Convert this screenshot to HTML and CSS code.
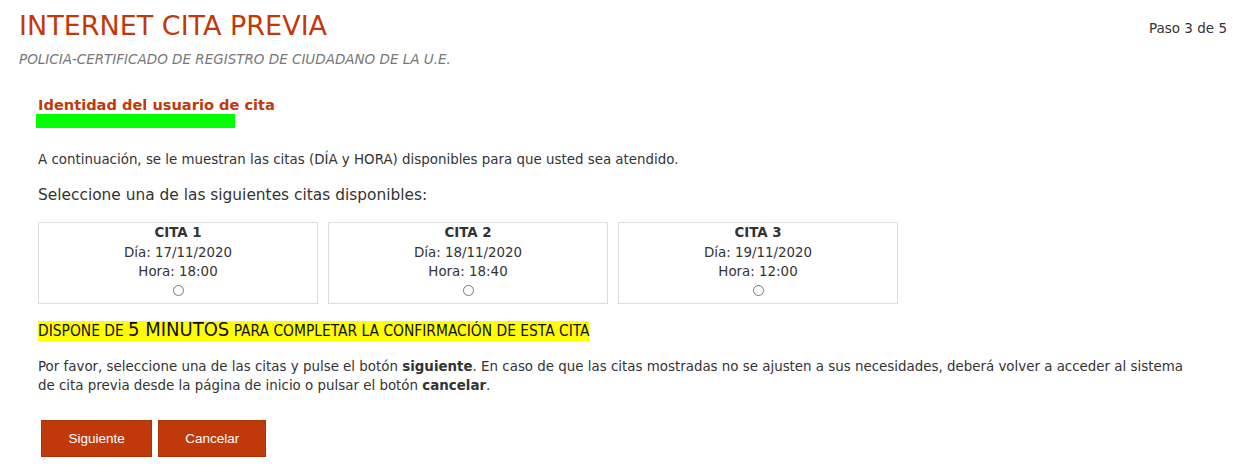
FILE: index.html
```html
<!DOCTYPE html>
<html lang="es">
<head>
    <meta charset="UTF-8">
    <title>Internet Cita Previa</title>
    <link rel="stylesheet" href="styles.css">
</head>
<body>
    <header class="page-head">
        <div class="head-titles">
            <h1 class="app-title">INTERNET CITA PREVIA</h1>
            <p class="app-subtitle">POLICIA-CERTIFICADO DE REGISTRO DE CIUDADANO DE LA U.E.</p>
        </div>
        <div class="step">Paso 3 de 5</div>
    </header>

    <main class="content">
        <h2 class="section-title">Identidad del usuario de cita</h2>
        <div class="mark-bar"></div>

        <p class="intro">A continuación, se le muestran las citas (DÍA y HORA) disponibles para que usted sea atendido.</p>
        <p class="lead">Seleccione una de las siguientes citas disponibles:</p>

        <div class="slots">
            <label class="slot">
                <strong>CITA 1</strong>
                <span>Día: 17/11/2020</span>
                <span>Hora: 18:00</span>
                <input type="radio" name="cita" value="1">
            </label>
            <label class="slot">
                <strong>CITA 2</strong>
                <span>Día: 18/11/2020</span>
                <span>Hora: 18:40</span>
                <input type="radio" name="cita" value="2">
            </label>
            <label class="slot">
                <strong>CITA 3</strong>
                <span>Día: 19/11/2020</span>
                <span>Hora: 12:00</span>
                <input type="radio" name="cita" value="3">
            </label>
        </div>

        <p class="warning"><span class="hl">DISPONE DE <span class="big">5 MINUTOS</span> PARA COMPLETAR LA CONFIRMACIÓN DE ESTA CITA</span></p>

        <p class="note">Por favor, seleccione una de las citas y pulse el botón <b>siguiente</b>. En caso de que las citas mostradas no se ajusten a sus necesidades, deberá volver a acceder al sistema de cita previa desde la página de inicio o pulsar el botón <b>cancelar</b>.</p>

        <div class="actions">
            <button class="btn" type="button">Siguiente</button>
            <button class="btn" type="button">Cancelar</button>
        </div>
    </main>
</body>
</html>
```

FILE: styles.css
```css
:root {
    --color-brand: #c0390b;
    --color-text: #333;
    --font-main: 'DejaVu Sans', Verdana, sans-serif;
}

* {
    margin: 0;
    padding: 0;
    box-sizing: border-box;
}

body {
    font-family: var(--font-main);
    color: var(--color-text);
    background: #fff;
    font-size: 13.4px;
}

.page-head {
    display: flex;
    justify-content: space-between;
    align-items: flex-start;
    padding: 10px 7px 0 19px;
}

.app-title {
    font-size: 27px;
    font-weight: 400;
    color: var(--color-brand);
    line-height: 32px;
}

.app-subtitle {
    font-size: 13.5px;
    font-style: italic;
    color: #777;
    margin-top: 9px;
}

.step {
    font-size: 13.5px;
    padding-top: 10px;
}

.content {
    padding: 28px 0 0 38px;
}

.section-title {
    font-size: 14.6px;
    font-weight: 700;
    color: var(--color-brand);
    line-height: 20px;
}

.mark-bar {
    width: 199px;
    height: 14px;
    background: #00ff00;
    margin: -1px 0 0 -2px;
}

.intro {
    margin-top: 23px;
    line-height: 18px;
}

.lead {
    font-size: 15.4px;
    margin-top: 16px;
    line-height: 20px;
}

.slots {
    display: flex;
    gap: 10px;
    margin-top: 17px;
}

.slot {
    width: 280px;
    height: 82px;
    border: 1px solid #ddd;
    display: flex;
    flex-direction: column;
    align-items: center;
    font-size: 13.4px;
    line-height: 19.5px;
}

.slot input {
    width: 11px;
    height: 11px;
    margin-top: 3px;
}

.warning {
    margin-top: 15px;
    font-family: 'DejaVu Sans Condensed', 'Liberation Sans Narrow', sans-serif;
    font-size: 15.4px;
    line-height: 20px;
}

.hl {
    background: #ffff00;
    color: #111;
    padding: 1px 0;
}

.hl .big {
    font-size: 20px;
}

.note {
    margin-top: 16px;
    line-height: 19px;
    max-width: 1160px;
}

.note b {
    font-weight: 700;
}

.actions {
    display: flex;
    gap: 6px;
    margin: 25px 0 0 3px;
}

.btn {
    height: 37px;
    padding: 0 26.5px;
    background: var(--color-brand);
    color: #fff;
    border: 1px solid #a8320a;
    font-family: 'Liberation Sans', Arial, sans-serif;
    font-size: 13.5px;
    cursor: pointer;
}

.btn + .btn {
    padding: 0 26px;
}
```
